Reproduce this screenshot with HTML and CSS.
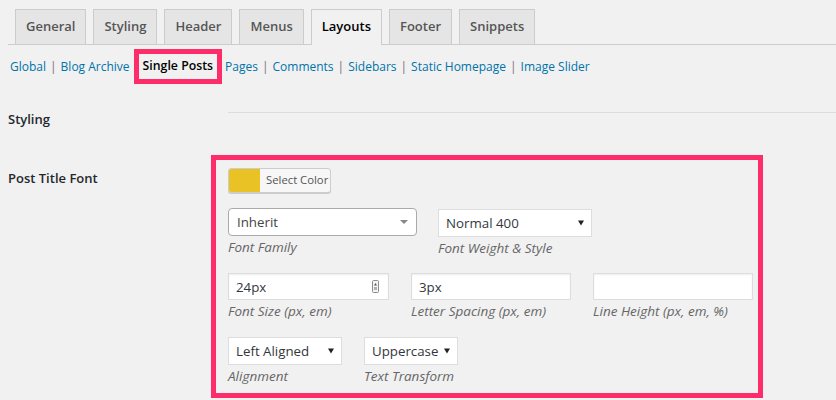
FILE: index.html
```html
<!DOCTYPE html>
<html lang="en">
<head>
<meta charset="utf-8">
<title>Layouts - Single Posts</title>
<link rel="stylesheet" href="styles.css">
</head>
<body>
<nav class="tabs">
  <a class="tab">General</a>
  <a class="tab">Styling</a>
  <a class="tab">Header</a>
  <a class="tab">Menus</a>
  <a class="tab tab-active">Layouts</a>
  <a class="tab">Footer</a>
  <a class="tab">Snippets</a>
</nav>
<div class="subnav">
  <a class="link">Global</a><span class="sep">|</span><a class="link">Blog Archive</a><span class="current">Single Posts</span><a class="link link-after">Pages</a><span class="sep">|</span><a class="link">Comments</a><span class="sep">|</span><a class="link">Sidebars</a><span class="sep">|</span><a class="link">Static Homepage</a><span class="sep">|</span><a class="link">Image Slider</a>
</div>
<div class="settings">
  <div class="section-row">
    <h3 class="section-title">Styling</h3>
    <div class="rule"></div>
  </div>
  <div class="field-row">
    <div class="field-label">Post Title Font</div>
    <div class="highlight">
      <div class="color-btn"><span class="swatch"></span><span class="color-text">Select Color</span></div>
      <div class="frow frow-first">
        <div class="field">
          <div class="select select-round w-family"><span>Inherit</span>
            <svg class="arrow" width="8" height="4" viewBox="0 0 8 4"><path d="M0 0H8L4 4Z" fill="#888"/></svg>
          </div>
          <span class="hint">Font Family</span>
        </div>
        <div class="field field-low">
          <div class="select w-weight"><span>Normal 400</span>
            <svg class="arrow" width="6" height="6" viewBox="0 0 6 6"><path d="M0 0.5H6L3 5.5Z" fill="#222"/></svg>
          </div>
          <span class="hint">Font Weight &amp; Style</span>
        </div>
      </div>
      <div class="frow frow-wide">
        <div class="field">
          <div class="input w-size"><span>24px</span>
            <svg class="spin" width="7" height="13" viewBox="0 0 7 13"><rect x="0.5" y="0.5" width="6" height="12" rx="1" fill="#f4f4f4" stroke="#8c8c8c"/><path d="M2 5.5L3.5 3L5 5.5Z" fill="#555"/><rect x="2" y="7" width="3" height="3" fill="#b0b0b0"/></svg>
          </div>
          <span class="hint">Font Size (px, em)</span>
        </div>
        <div class="field">
          <div class="input w-other"><span>3px</span></div>
          <span class="hint">Letter Spacing (px, em)</span>
        </div>
        <div class="field">
          <div class="input w-other"></div>
          <span class="hint">Line Height (px, em, %)</span>
        </div>
      </div>
      <div class="frow frow-wide frow-last">
        <div class="field">
          <div class="select w-align"><span>Left Aligned</span>
            <svg class="arrow" width="6" height="6" viewBox="0 0 6 6"><path d="M0 0.5H6L3 5.5Z" fill="#222"/></svg>
          </div>
          <span class="hint">Alignment</span>
        </div>
        <div class="field">
          <div class="select w-transform"><span>Uppercase</span>
            <svg class="arrow" width="6" height="6" viewBox="0 0 6 6"><path d="M0 0.5H6L3 5.5Z" fill="#222"/></svg>
          </div>
          <span class="hint">Text Transform</span>
        </div>
      </div>
    </div>
  </div>
</div>
</body>
</html>
```
FILE: styles.css
```css
body {
  margin: 0;
  background: #f1f1f1;
  font-family: "Open Sans", "Noto Sans", sans-serif;
  color: #23282d;
}

.tabs {
  display: flex;
  align-items: flex-start;
  margin-left: 8px;
  padding-top: 9px;
  border-bottom: 1px solid #ccc;
}

.tab {
  box-sizing: border-box;
  height: 35px;
  margin-left: 7px;
  padding: 0 10px;
  border: 1px solid #ccc;
  border-bottom: none;
  background: #e5e5e5;
  color: #555;
  font-size: 13px;
  font-weight: 600;
  line-height: 33px;
  text-decoration: none;
}

.tab-active {
  height: 36px;
  margin-bottom: -1px;
  background: #f1f1f1;
  color: #000;
}

.subnav {
  display: flex;
  align-items: center;
  height: 35px;
  margin-top: 4px;
  padding-left: 10px;
  font-size: 12px;
}

.link {
  color: #0073aa;
  text-decoration: none;
}

.sep {
  color: #7a6a7a;
  margin: 0 4px;
}

.current {
  box-sizing: border-box;
  height: 35px;
  margin-left: 4px;
  margin-right: 3px;
  padding: 0 4px;
  border: 5px solid #fe2d69;
  color: #000;
  font-weight: 600;
  font-size: 12.3px;
  line-height: 24px;
}

.settings {
  padding-left: 8px;
}

.section-row {
  display: flex;
  margin-top: 24px;
  height: 22px;
}

.section-title {
  width: 203px;
  margin: 0;
  font-size: 13px;
  font-weight: 600;
  line-height: 22px;
}

.rule {
  flex: 1;
  margin-left: 17px;
  margin-top: 4px;
  border-top: 1px solid #dcdcdc;
}

.field-row {
  display: flex;
  margin-top: 25px;
}

.field-label {
  width: 203px;
  padding-top: 13px;
  font-size: 13px;
  font-weight: 600;
  line-height: 20px;
}

.highlight {
  box-sizing: border-box;
  width: 552px;
  border: 5px solid #fe2d69;
  padding: 8px 5px 8px 12px;
}

.color-btn {
  box-sizing: border-box;
  display: flex;
  width: 103px;
  height: 25px;
  border: 1px solid #ccc;
  border-radius: 3px;
  background: #f7f7f7;
  box-shadow: 0 1px 0 #ccc;
  overflow: hidden;
}

.swatch {
  width: 31px;
  background: #e9c326;
}

.color-text {
  padding-left: 6px;
  font-size: 11.3px;
  line-height: 22px;
  color: #555;
}

.frow {
  display: flex;
  align-items: flex-start;
  gap: 21px;
  margin-top: 16px;
}

.frow-first {
  margin-top: 15px;
}

.frow-wide {
  gap: 22px;
}

.frow-last {
  margin-top: 17px;
}

.field {
  display: flex;
  flex-direction: column;
}

.field-low {
  margin-top: 1px;
}

.hint {
  margin-top: 2px;
  font-size: 13.5px;
  font-style: italic;
  line-height: 18px;
  color: #666;
}

.select,
.input {
  box-sizing: border-box;
  display: flex;
  align-items: center;
  justify-content: space-between;
  border: 1px solid #ddd;
  background: #fff;
  font-size: 13.3px;
  color: #32373c;
}

.select {
  height: 28px;
  padding: 0 7px;
}

.select-round {
  border-color: #aaa;
  border-radius: 4px;
  padding: 0 8px;
  color: #444;
}

.input {
  height: 27px;
  padding: 0 9px 0 7px;
  box-shadow: inset 0 1px 2px rgba(0, 0, 0, 0.07);
}

.w-family { width: 189px; }
.w-weight { width: 154px; }
.w-size { width: 161px; }
.w-other { width: 160px; }
.w-align { width: 114px; }
.w-transform { width: 94px; }

.arrow,
.spin {
  flex: none;
}
```
